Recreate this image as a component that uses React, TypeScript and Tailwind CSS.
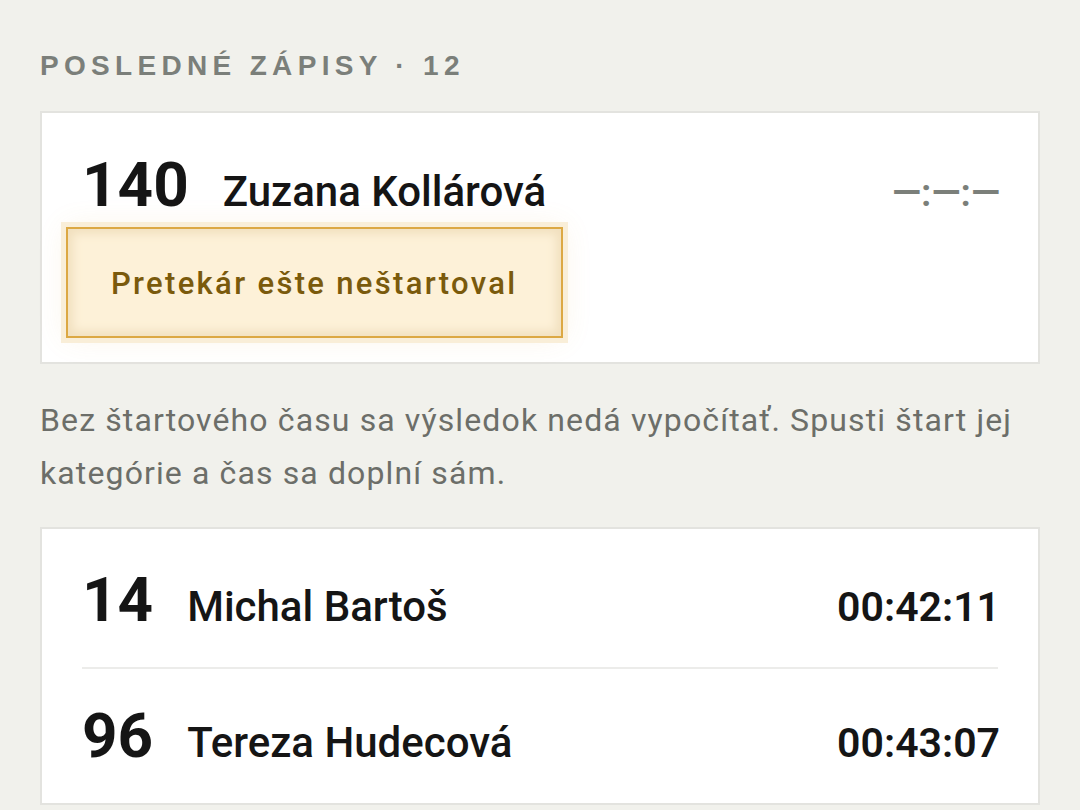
import React from 'react';

interface Entry {
  bib: number;
  name: string;
  time: string;
}

const finished: Entry[] = [
  { bib: 14, name: 'Michal Bartoš', time: '00:42:11' },
  { bib: 96, name: 'Tereza Hudecová', time: '00:43:07' },
];

const body = { fontFamily: 'Roboto, "Liberation Sans", sans-serif' };

const App: React.FC = () => {
  return (
    <div className="min-h-[810px] bg-[#f1f1ec] px-10 pt-[52px] text-[#151515]" style={body}>
      <h2
        className="mb-[31px] text-[28px] font-bold uppercase leading-none tracking-[0.19em] text-[#7b7f7a]"
        style={{ fontFamily: '"Liberation Sans", Arial, sans-serif' }}
      >
        Posledné zápisy · 12
      </h2>

      {/* runner without a start time */}
      <div className="border-2 border-[#e3e3df] bg-white px-10 pb-6 pt-[41px]">
        <div className="flex items-baseline">
          <span className="text-[62px] font-bold leading-none">140</span>
          <span className="ml-[34px] flex-1 text-[42px] font-medium leading-none">Zuzana Kollárová</span>
          <span className="-mr-[2px] text-[38px] font-semibold leading-none text-[#7b7f7a]">—:—:—</span>
        </div>
        <div className="-ml-4 mt-[11px] inline-block border-2 border-[#dca843] bg-[#fdf1d8] px-[43px] py-[30px] shadow-[inset_0_0_10px_5px_#f1e0bf,0_0_0_5px_#f9eed8,0_0_28px_rgba(220,168,67,0.12)]">
          <span className="block translate-y-[2px] text-[31px] font-medium leading-[1.5] tracking-[0.075em] text-[#7a5a0c]">
            Pretekár ešte neštartoval
          </span>
        </div>
      </div>

      <p className="mt-[30px] text-[32px] leading-[53px] tracking-[0.035em] text-[#6c6e69]">
        Bez štartového času sa výsledok nedá vypočítať. Spusti štart jej kategórie a čas sa doplní sám.
      </p>

      <div className="mt-[27px] border-2 border-[#e3e3df] bg-white px-10 pt-1">
        {finished.map((e, i) => (
          <div
            key={e.bib}
            className={`flex items-baseline py-9 ${i < finished.length - 1 ? 'border-b-2 border-[#ececea]' : ''}`}
          >
            <span className="text-[62px] font-bold leading-none">{e.bib}</span>
            <span className="ml-[34px] flex-1 text-[42px] font-medium leading-none">{e.name}</span>
            <span className="-mr-[2px] text-[41px] font-semibold leading-none">{e.time}</span>
          </div>
        ))}
      </div>
    </div>
  );
};

export default App;
